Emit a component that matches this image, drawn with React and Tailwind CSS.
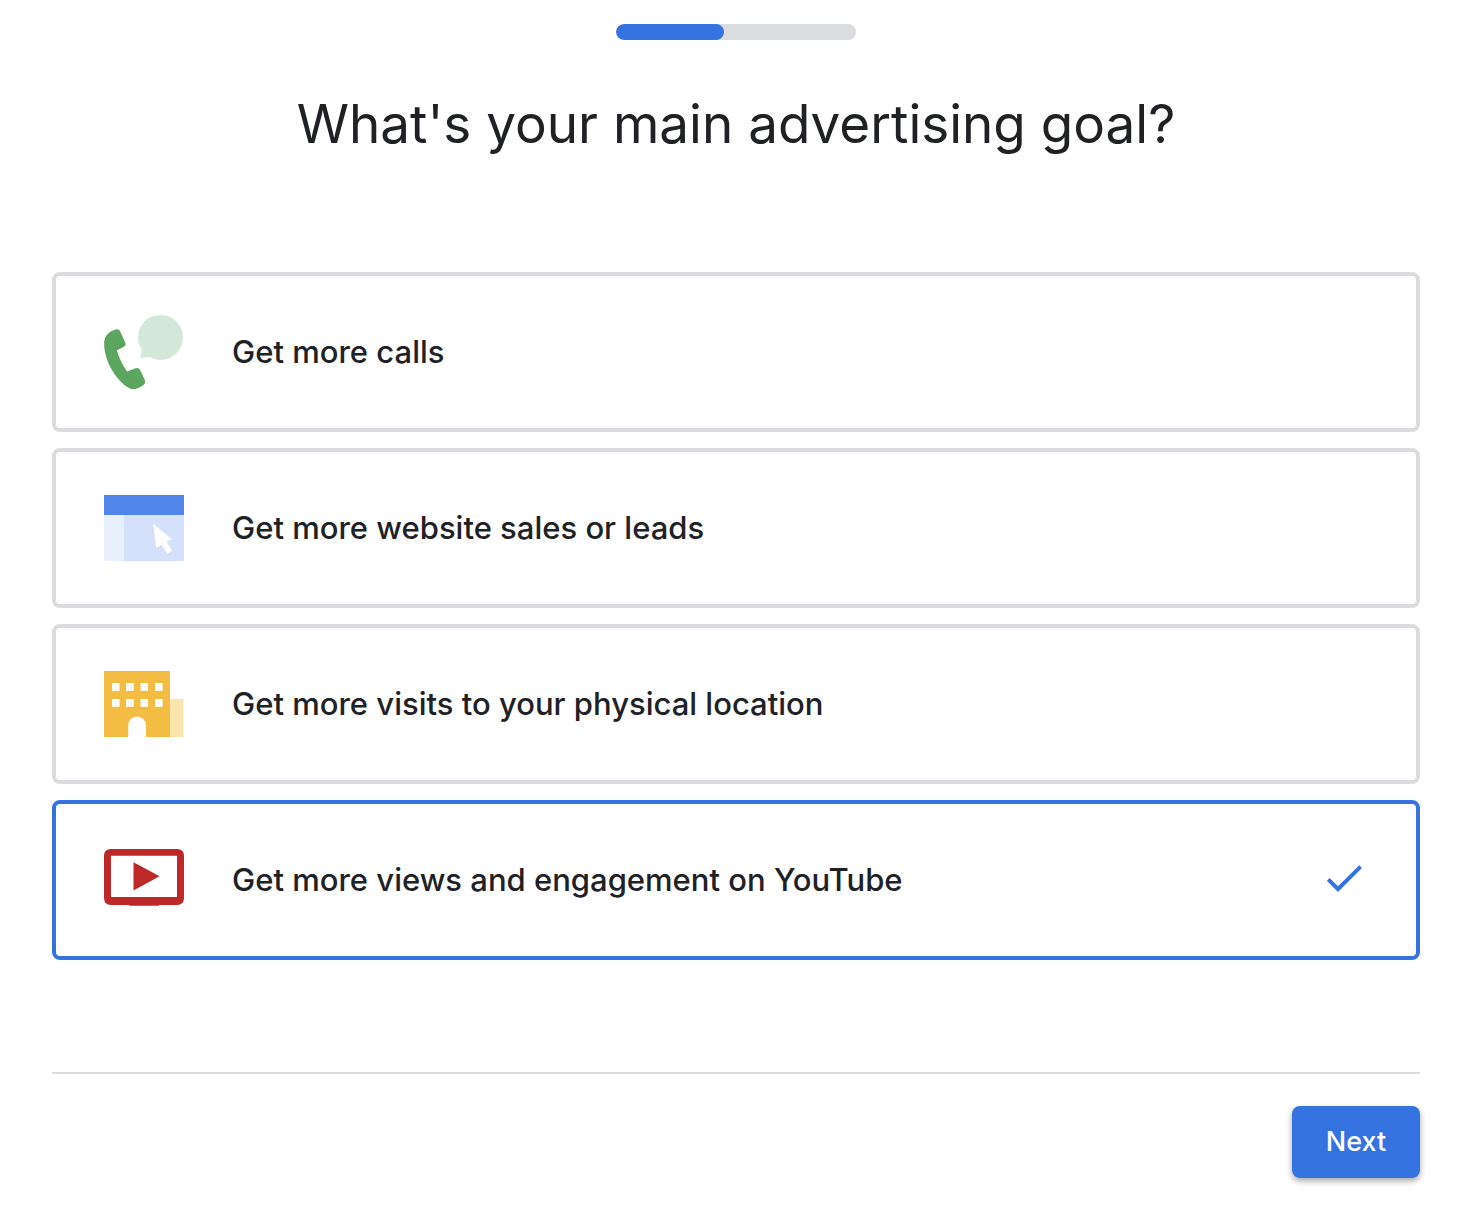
import { useState } from "react";
import clsx from "clsx";

function CallsIcon() {
  return (
    <svg viewBox="0 0 80 80" className="size-20 shrink-0" aria-hidden="true">
      <circle cx="56.5" cy="25.4" r="22.5" fill="#d3e8d8" />
      <path d="M37 34L37.4 37.5Q37.6 42 36 46.3L47 44.6L50 36Z" fill="#d3e8d8" />
      <path
        d="M9.5 18.2L11.6 17.4Q14.6 16.5 16 19L21.2 30.4Q22.3 33 19.8 34.8L12.8 38.6C15.2 46.5 18.6 53.4 23.2 59.4L30.8 56.5Q34.6 55 36.4 58.4L40.7 67.8Q42 71.4 39 73.6C35 76 32 77.3 29.5 77.3C19 76.5 0 54 0.1 31C0.5 25 3 21 9.5 18.2Z"
        fill="#5ba55f"
      />
    </svg>
  );
}

function WebsiteIcon() {
  return (
    <svg viewBox="0 0 80 80" className="size-20 shrink-0" aria-hidden="true">
      <rect y="27" width="20" height="46" fill="#e8effd" />
      <rect x="20" y="27" width="60" height="46" fill="#d5e1fb" />
      <rect y="7" width="80" height="20" fill="#5086ec" />
      <path
        d="M49.3 36L67.8 51.3L62.6 53.3L67.8 62.7L63.4 65.8L57.6 56.8L52.2 59.8Z"
        fill="#fff"
      />
    </svg>
  );
}

function LocationIcon() {
  return (
    <svg viewBox="0 0 80 80" className="size-20 shrink-0" aria-hidden="true">
      <rect x="66" y="35" width="13.5" height="38" fill="#fae5ad" />
      <rect y="7" width="66" height="66" fill="#f2bd42" />
      {[19, 35].map((y) =>
        [8, 22.2, 36.5, 51].map((x) => (
          <rect key={`${x}-${y}`} x={x} y={y} width="7.6" height="7.8" fill="#fff" />
        ))
      )}
      <path d="M24.2 73V61.4A8.9 8.9 0 0 1 42 61.4V73Z" fill="#fff" />
    </svg>
  );
}

function VideoIcon() {
  return (
    <svg viewBox="0 0 80 80" className="size-20 shrink-0" aria-hidden="true">
      <path
        fillRule="evenodd"
        d="M7 9H73Q80 9 80 16V58Q80 65 73 65H55V65.8H25.3V65H7Q0 65 0 58V16Q0 9 7 9ZM7 15.7V57H73V15.7Z"
        fill="#bd2828"
      />
      <path d="M29.5 22.2L55.6 36.3L29.5 50.6Z" fill="#bd2828" />
    </svg>
  );
}

const goals = [
  { id: "calls", label: "Get more calls", Icon: CallsIcon },
  { id: "website", label: "Get more website sales or leads", Icon: WebsiteIcon },
  { id: "visits", label: "Get more visits to your physical location", Icon: LocationIcon },
  { id: "youtube", label: "Get more views and engagement on YouTube", Icon: VideoIcon },
];

export default function App() {
  const [selected, setSelected] = useState("youtube");

  return (
    <main className="min-h-screen bg-white pt-6 pr-11 pb-8 pl-[52px] font-['Inter',sans-serif] text-[#202124]">
      {/* Progress */}
      <div
        role="progressbar"
        aria-label="Progress"
        aria-valuenow={45}
        className="mx-auto h-4 w-60 overflow-hidden rounded-full bg-[#dadce0]"
      >
        <div className="h-full w-[45%] rounded-full bg-[#3574e0]" />
      </div>

      <h1 id="goal-heading" className="mt-12 text-center text-[53px] leading-[72px]">
        What's your main advertising goal?
      </h1>

      {/* Goals */}
      <div
        role="radiogroup"
        aria-labelledby="goal-heading"
        className="mt-28 flex flex-col gap-4"
      >
        {goals.map(({ id, label, Icon }) => (
          <label
            key={id}
            className={clsx(
              "relative flex cursor-pointer items-center gap-12 rounded-lg border-4 px-12 py-9",
              selected === id ? "border-[#3574e0]" : "border-[#dadce0]"
            )}
          >
            <input
              type="radio"
              name="goal"
              className="sr-only"
              checked={selected === id}
              onChange={() => setSelected(id)}
            />
            <Icon />
            <span className="flex-1 text-[31px] leading-10 font-medium">{label}</span>
            {selected === id && (
              <svg viewBox="0 1 24 24" className="size-12 shrink-0" aria-hidden="true">
                <path
                  d="M9 16.17L4.83 12l-1.42 1.41L9 19 21 7l-1.41-1.41z"
                  fill="#3574e0"
                />
              </svg>
            )}
          </label>
        ))}
      </div>

      <div className="mt-28 flex justify-end border-t-2 border-[#dadce0] pt-8">
        <button
          type="button"
          className="h-[72px] w-32 rounded-lg bg-[#3574e0] text-[27px] font-medium text-white shadow-[0_3px_6px_rgba(0,0,0,0.35)]"
        >
          Next
        </button>
      </div>
    </main>
  );
}
